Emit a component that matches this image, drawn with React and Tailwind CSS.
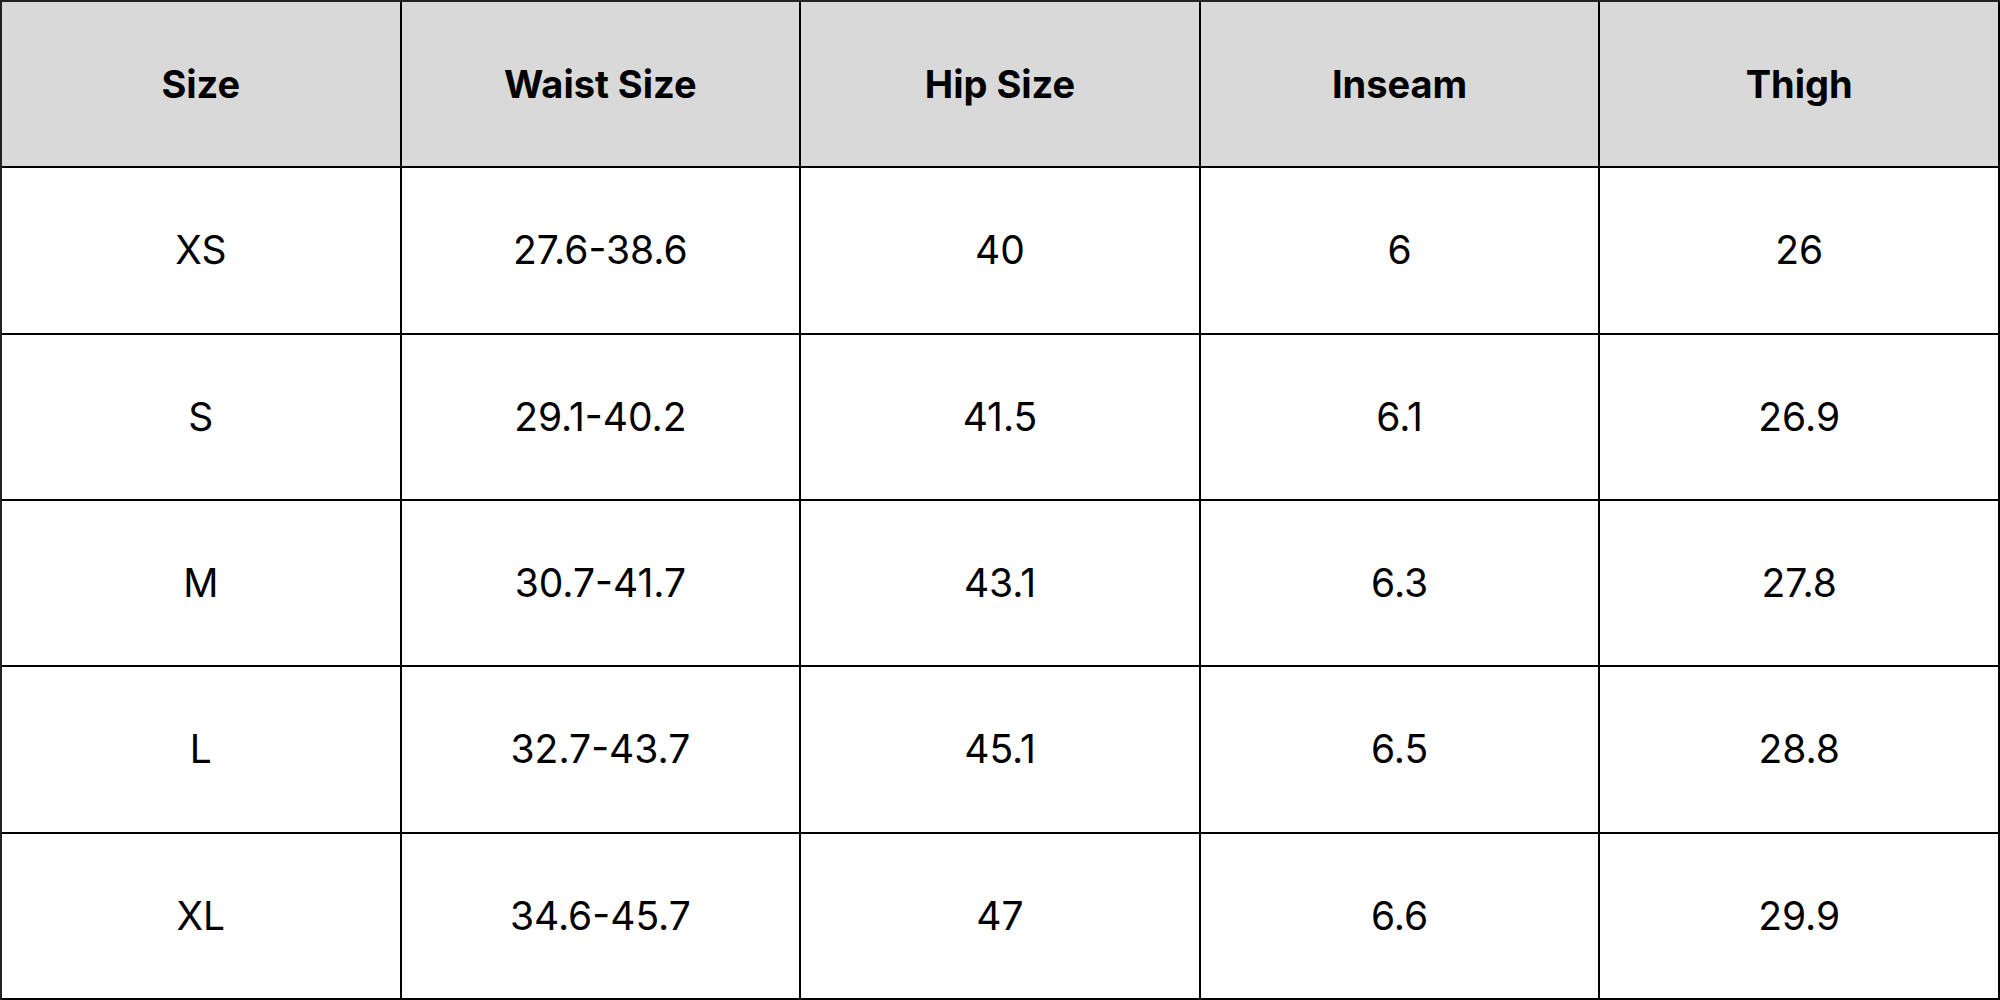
import React from 'react';

const headers = ['Size', 'Waist Size', 'Hip Size', 'Inseam', 'Thigh'];

const rows = [
    ['XS', '27.6-38.6', '40', '6', '26'],
    ['S', '29.1-40.2', '41.5', '6.1', '26.9'],
    ['M', '30.7-41.7', '43.1', '6.3', '27.8'],
    ['L', '32.7-43.7', '45.1', '6.5', '28.8'],
    ['XL', '34.6-45.7', '47', '6.6', '29.9'],
];

const App = () => {
    return (
        <div className="w-[2000px] h-[1000px] bg-white font-['Inter',sans-serif] text-black">
            <div className="grid grid-cols-5 grid-rows-6 w-full h-full border-t-2 border-l-2 border-[#222]">
                {headers.map((h) => (
                    <div
                        key={h}
                        className="flex items-center justify-center bg-[#d9d9d9] border-r-2 border-b-2 border-black text-[38px] font-bold"
                    >
                        {h}
                    </div>
                ))}
                {rows.map((row, i) =>
                    row.map((cell, j) => (
                        <div
                            key={`${i}-${j}`}
                            className="flex items-center justify-center border-r-2 border-b-2 border-black text-[39px]"
                        >
                            {cell}
                        </div>
                    ))
                )}
            </div>
        </div>
    );
};

export default App;
